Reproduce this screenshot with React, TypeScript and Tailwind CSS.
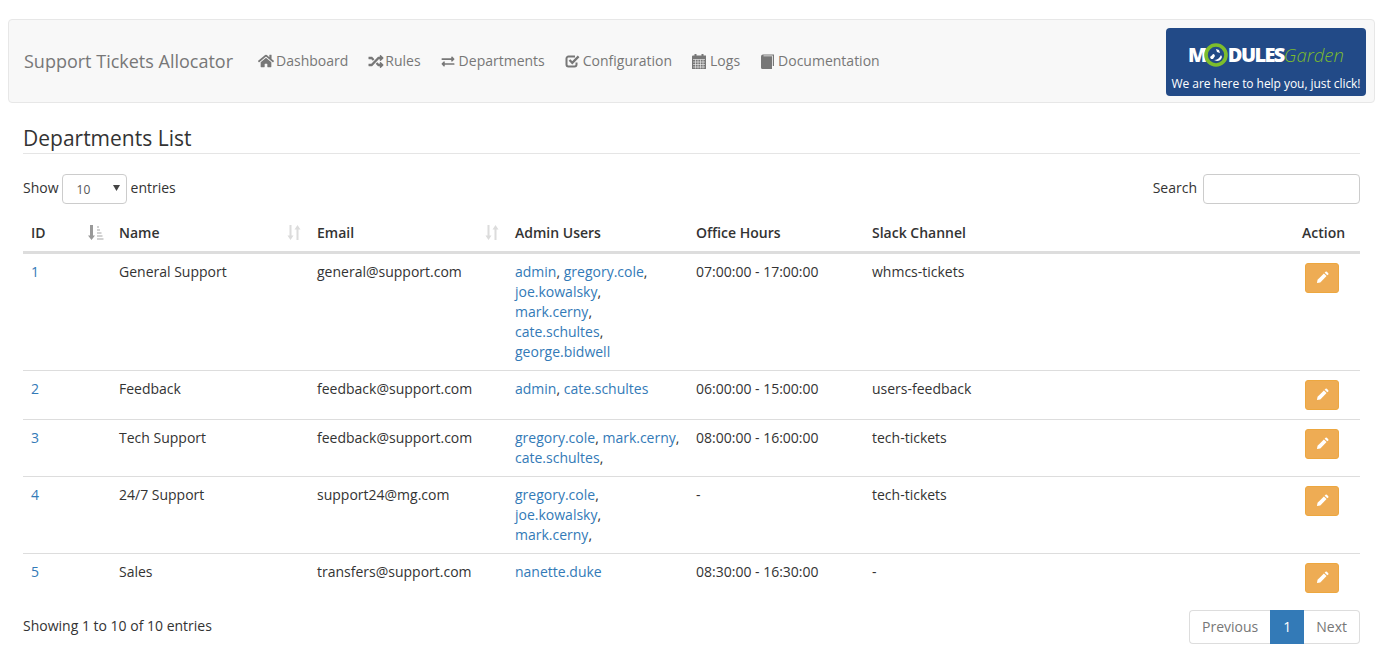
import { FaExchangeAlt, FaHome, FaRandom } from "react-icons/fa";

const CheckIcon = ({ className }: { className?: string }) => (
  <svg viewBox="0 0 15 14" className={className} fill="none" stroke="currentColor">
    <path d="M11.5 8.5v2a2 2 0 0 1-2 2h-6a2 2 0 0 1-2-2v-6a2 2 0 0 1 2-2h6.5" strokeWidth="2" />
    <path d="M4.5 6l2.8 2.8L13.6 2.4" strokeWidth="2.3" />
  </svg>
);

const CalendarIcon = ({ className }: { className?: string }) => (
  <svg viewBox="0 0 14 15" className={className} fill="currentColor">
    <rect x="2.5" y="0" width="2" height="3" />
    <rect x="9.5" y="0" width="2" height="3" />
    <path d="M1 1.5h13v13.5H0V2.5a1 1 0 0 1 1-1z" />
    <path d="M1 5.5h12M1 8h12M1 10.500h12M1 13h12M3.500 5.500V14.500M6 5.500V14.500M8.500 5.500V14.500M11 5.500V14.500" stroke="#f8f8f8" strokeWidth="0.6" />
  </svg>
);

const BookIcon = ({ className }: { className?: string }) => (
  <svg viewBox="0 0 13 15" className={className} fill="currentColor">
    <path d="M0 2.500Q0 .5 2 .5h11v11.500h-1.200V1.600H2.500v.6H11v12.800H1.500Q0 15 0 13.500z" />
  </svg>
);

const PencilIcon = ({ className }: { className?: string }) => (
  <svg viewBox="0 0 14 14" className={className} fill="currentColor">
    <path d="M1 13l.7-3.600L8.500 2.600l2.900 2.900-6.800 6.800z" />
    <path d="M9.300 1.800l1-1a1 1 0 0 1 1.400 0l1.500 1.500a1 1 0 0 1 0 1.400l-1 1z" />
  </svg>
);

const nav = [
  { icon: FaHome, label: "Dashboard", cls: "h-4 w-4 mr-[2px]" },
  { icon: FaRandom, label: "Rules", cls: "-ml-[1px] h-[15px] w-[18px]" },
  { icon: FaExchangeAlt, label: "Departments", cls: "h-[13px] w-[14px] mr-[4px]" },
  { icon: CheckIcon, label: "Configuration", cls: "h-[14px] w-[15px] mr-[3px]" },
  { icon: CalendarIcon, label: "Logs", cls: "h-[15px] w-[14px] mr-[4px]" },
  { icon: BookIcon, label: "Documentation", cls: "ml-[1px] h-[15px] w-[13px] mr-[4px]" },
];

type Row = {
  id: string;
  name: string;
  email: string;
  admins: string[];
  hours: string;
  slack: string;
  h: string;
};

const rows: Row[] = [
  {
    id: "1",
    name: "General Support",
    email: "general@support.com",
    admins: ["admin, gregory.cole,", "joe.kowalsky,", "mark.cerny,", "cate.schultes,", "george.bidwell"],
    hours: "07:00:00 - 17:00:00",
    slack: "whmcs-tickets",
    h: "h-[116px]",
  },
  {
    id: "2",
    name: "Feedback",
    email: "feedback@support.com",
    admins: ["admin, cate.schultes"],
    hours: "06:00:00 - 15:00:00",
    slack: "users-feedback",
    h: "h-[49px]",
  },
  {
    id: "3",
    name: "Tech Support",
    email: "feedback@support.com",
    admins: ["gregory.cole, mark.cerny,", "cate.schultes,"],
    hours: "08:00:00 - 16:00:00",
    slack: "tech-tickets",
    h: "h-[57px]",
  },
  {
    id: "4",
    name: "24/7 Support",
    email: "support24@mg.com",
    admins: ["gregory.cole,", "joe.kowalsky,", "mark.cerny,"],
    hours: "-",
    slack: "tech-tickets",
    h: "h-[77px]",
  },
  {
    id: "5",
    name: "Sales",
    email: "transfers@support.com",
    admins: ["nanette.duke"],
    hours: "08:30:00 - 16:30:00",
    slack: "-",
    h: "h-[46px]",
  },
];

// names in blue, the commas between them stay grey
const AdminLine = ({ line }: { line: string }) => (
  <div>
    {line.split(/(, ?)/).map((part, i) =>
      part.startsWith(",") ? (
        <span key={i} className="text-[#333]">{part}</span>
      ) : (
        <a key={i} className="text-[#337ab7]">{part}</a>
      )
    )}
  </div>
);

const SortIcon = () => (
  <svg viewBox="0 0 14 15" className="h-[15px] w-[14px] text-[#dcdcdc]" fill="currentColor">
    <path d="M2.500 0h2v10.500h2L3.500 15 .5 10.500h2z" />
    <path d="M9.500 15h2V4.500h2L10.500 0l-3 4.500h2z" />
  </svg>
);

const SortedIcon = () => (
  <svg viewBox="0 0 16 15" className="h-[15px] w-[16px]" fill="none">
    <path d="M2 0h3v10.500h2L3.500 15 0 10.500h2z" fill="#999" />
    <path d="M9 2h2M9 5h3M9 8h4.500M9 11h5.500M9 14h6.500" stroke="#c4c4c4" strokeWidth="1.500" />
  </svg>
);

const App = () => {
  return (
    <div className="min-h-screen bg-white font-['Open_Sans',sans-serif] text-[14px] leading-[20px] text-[#333] pt-[19px] pl-[8px] pr-[10px]">
      {/* Navbar */}
      <nav className="flex h-[84px] items-center justify-between rounded border border-[#e7e7e7] bg-[#f8f8f8] pl-[15px] pr-[8px]">
        <div className="flex items-center">
          <span className="text-[18px] text-[#777] mr-[25px]">Support Tickets Allocator</span>
          <div className="flex items-center gap-[20px] text-[#777]">
            {nav.map((n) => (
              <span key={n.label} className="flex items-center">
                <n.icon className={n.cls} />
                {n.label}
              </span>
            ))}
          </div>
        </div>
        <div className="mt-[2px] flex h-[68px] w-[200px] flex-col items-center rounded-sm bg-[#224a87] text-white">
          <div className="mt-[15px] flex h-[24px] items-center text-[20px] font-extrabold tracking-[-1.6px]">
            <span>M</span>
            <svg viewBox="0 0 24 24" className="-ml-[2px] h-[24px] w-[24px]">
              <circle cx="12" cy="12" r="10" fill="none" stroke="#7dbd2c" strokeWidth="3.6" />
              <path d="M6 14c2-1 2-3 4-3l1 2-2 3-2 0zM12 6l3 1 1 3-3-1zM10 17c3 0 6-2 7-5l1 2c-1 3-3 4-5 4z" fill="#fff" />
            </svg>
            <span>DULES</span>
            <span className="font-light italic text-[18.5px] tracking-normal text-[#7dbd2c]">Garden</span>
          </div>
          <span className="mt-[8px] text-[12px] font-medium leading-[18px] tracking-[-0.05px]">We are here to help you, just click!</span>
        </div>
      </nav>

      <div className="pl-[15px] pr-[15px]">
        <h2 className="mt-[20px] border-b border-[#e5e5e5] text-[21px] leading-[30px] text-[#333]">Departments List</h2>

        {/* Length and search */}
        <div className="mt-[20px] flex h-[30px] items-center justify-between">
          <div className="flex items-center">
            <span className="-mt-[2px]">Show</span>
            <div className="relative ml-[3px] mr-[4px] flex h-[30px] w-[65px] items-center rounded border border-[#ccc] bg-white pl-[14px] pt-[2px] text-[12px] text-[#555]">
              10
              <svg viewBox="0 0 7 6" className="absolute right-[6px] top-[10px] h-[6px] w-[7px] text-[#444]" fill="currentColor">
                <path d="M0 0h7L3.500 6z" />
              </svg>
            </div>
            <span className="-mt-[2px]">entries</span>
          </div>
          <div className="flex items-center">
            <span className="-mt-[2px]">Search</span>
            <div className="ml-[6px] h-[30px] w-[157px] rounded border border-[#ccc] bg-white" />
          </div>
        </div>

        {/* Table */}
        <table className="mt-[11px] w-full table-fixed border-collapse">
          <colgroup>
            <col className="w-[88px]" />
            <col className="w-[198px]" />
            <col className="w-[198px]" />
            <col className="w-[181px]" />
            <col className="w-[176px]" />
            <col />
            <col className="w-[66px]" />
          </colgroup>
          <thead>
            <tr className="h-[37px] border-b-[3px] border-[#ddd] text-left font-semibold">
              <th className="relative px-[8px] font-semibold">
                ID
                <span className="absolute right-[7px] top-[10px]"><SortedIcon /></span>
              </th>
              <th className="relative px-[8px] font-semibold">
                Name
                <span className="absolute right-[8px] top-[10px]"><SortIcon /></span>
              </th>
              <th className="relative px-[8px] font-semibold">
                Email
                <span className="absolute right-[8px] top-[10px]"><SortIcon /></span>
              </th>
              <th className="px-[8px] font-semibold">Admin Users</th>
              <th className="px-[8px] font-semibold">Office Hours</th>
              <th className="px-[8px] font-semibold">Slack Channel</th>
              <th className="px-[8px] font-semibold">Action</th>
            </tr>
          </thead>
          <tbody>
            {rows.map((r, i) => (
              <tr key={r.id} className={`${r.h} align-top ${i < rows.length - 1 ? "border-b border-[#ddd]" : ""}`}>
                <td className="p-[8px] text-[#337ab7]">{r.id}</td>
                <td className="p-[8px]">{r.name}</td>
                <td className="p-[8px]">{r.email}</td>
                <td className="p-[8px] whitespace-nowrap">
                  {r.admins.map((l) => (
                    <AdminLine key={l} line={l} />
                  ))}
                </td>
                <td className="p-[8px]">{r.hours}</td>
                <td className="p-[8px]">{r.slack}</td>
                <td className="p-[8px]">
                  <button className="ml-[3px] mt-[1px] flex h-[30px] w-[34px] items-center justify-center rounded-[3px] border border-[#eda73f] bg-[#eeac54] pb-[1px] text-white">
                    <PencilIcon className="h-[13px] w-[13px]" />
                  </button>
                </td>
              </tr>
            ))}
          </tbody>
        </table>

        {/* Footer */}
        <div className="mt-[9px] flex items-center justify-between">
          <span className="-mt-[2px]">Showing 1 to 10 of 10 entries</span>
          <div className="flex h-[34px] items-center">
            <span className="flex h-full items-center rounded-l border border-r-0 border-[#ddd] px-[12px] text-[#777]">Previous</span>
            <span className="flex h-full items-center bg-[#337ab7] px-[13px] text-white">1</span>
            <span className="flex h-full items-center rounded-r border border-l-0 border-[#ddd] px-[12px] text-[#777]">Next</span>
          </div>
        </div>
      </div>
    </div>
  );
};

export default App;
